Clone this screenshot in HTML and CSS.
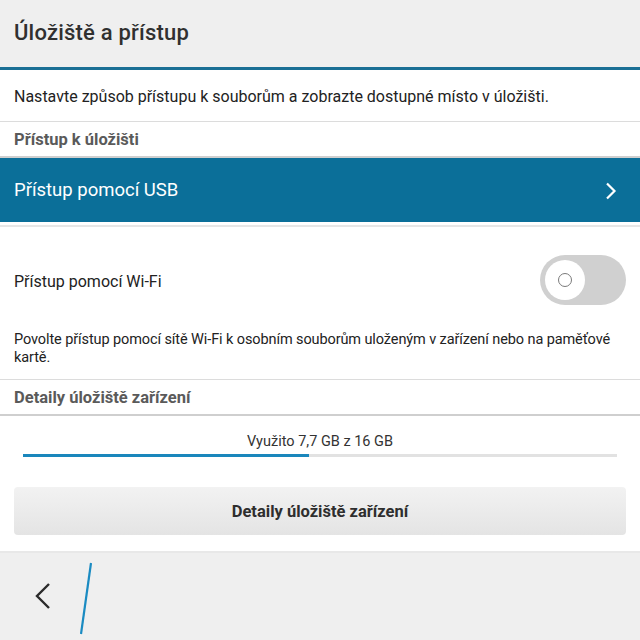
FILE: index.html
```html
<!DOCTYPE html>
<html lang="cs">
<head>
  <meta charset="UTF-8" />
  <title>Úložiště a přístup</title>
  <link rel="stylesheet" href="styles.css">
</head>
<body>

<div class="screen">
  <div class="title-bar">
    <h1>Úložiště a přístup</h1>
  </div>

  <div class="content">
    <p class="intro">Nastavte způsob přístupu k souborům a zobrazte dostupné místo v úložišti.</p>

    <div class="section-head">Přístup k úložišti</div>

    <div class="nav-row">
      <span>Přístup pomocí USB</span>
      <svg class="chevron" width="14" height="18" viewBox="0 0 14 18">
        <polyline points="3,1.5 10.5,9 3,16.5" fill="none" stroke="#fff" stroke-width="2.2" />
      </svg>
    </div>

    <div class="toggle-row">
      <span class="toggle-label">Přístup pomocí Wi-Fi</span>
      <div class="toggle">
        <div class="knob"><div class="ring"></div></div>
      </div>
    </div>

    <p class="note">Povolte přístup pomocí sítě Wi-Fi k osobním souborům uloženým v zařízení nebo na paměťové kartě.</p>

    <div class="section-head">Detaily úložiště zařízení</div>

    <div class="storage">
      <div class="storage-label">Využito 7,7 GB z 16 GB</div>
      <div class="bar"><div class="bar-fill" style="width: 48.1%"></div></div>
      <button class="action-button">Detaily úložiště zařízení</button>
    </div>
  </div>

  <div class="action-bar">
    <svg class="back" width="20" height="30" viewBox="0 0 20 30">
      <polyline points="15,2 3,14 15,26" fill="none" stroke="#2b2b2b" stroke-width="2.4" />
    </svg>
    <svg class="slash" width="16" height="74" viewBox="0 0 16 74">
      <line x1="14" y1="1" x2="4" y2="72" stroke="#1a8bc2" stroke-width="2.2" />
    </svg>
  </div>
</div>

</body>
</html>
```

FILE: styles.css
```css
* {
  margin: 0;
  padding: 0;
  box-sizing: border-box;
  font-family: 'Roboto', 'Liberation Sans', sans-serif;
}

html, body {
  height: 100%;
  background: #fff;
  color: #222;
  overflow: hidden;
}

.screen {
  display: flex;
  flex-direction: column;
  height: 640px;
  width: 640px;
}

.title-bar {
  height: 70px;
  flex: none;
  background: #efefef;
  border-bottom: 3px solid #1b6f95;
  display: flex;
  align-items: center;
  padding: 0 14px 3px;
}

.title-bar h1 {
  font-size: 22px;
  font-weight: 500;
  color: #303030;
  letter-spacing: 0.2px;
}

.content {
  flex: 1;
  display: flex;
  flex-direction: column;
}

.intro {
  height: 52px;
  flex: none;
  display: flex;
  align-items: center;
  padding: 2px 14px 0;
  font-size: 16px;
  color: #222;
  border-bottom: 1px solid #dcdcdc;
}

.section-head {
  height: 36px;
  flex: none;
  display: flex;
  align-items: center;
  padding: 0 14px;
  font-size: 16.5px;
  font-weight: 700;
  color: #5a5a5a;
  border-bottom: 2px solid #cfcfcf;
}

.nav-row {
  height: 64px;
  flex: none;
  background: #0b6f99;
  color: #fff;
  font-size: 18.5px;
  display: flex;
  align-items: center;
  justify-content: space-between;
  padding: 0 22px 0 14px;
}

.chevron {
  display: block;
  margin-top: 1px;
}

.toggle-row {
  margin-top: 3px;
  border-top: 2px solid #e6e6e6;
  height: 100px;
  flex: none;
  display: flex;
  align-items: flex-start;
  justify-content: space-between;
  padding: 28px 14px 0;
  font-size: 16px;
  color: #222;
}

.toggle-label {
  line-height: 50px;
  padding-top: 2px;
}

.toggle {
  width: 86px;
  height: 50px;
  border-radius: 25px;
  background: #d0d0d0;
  display: flex;
  align-items: center;
  padding-left: 5px;
}

.knob {
  width: 40px;
  height: 40px;
  border-radius: 50%;
  background: #fff;
  display: flex;
  align-items: center;
  justify-content: center;
}

.ring {
  width: 14px;
  height: 14px;
  border-radius: 50%;
  border: 1.5px solid #7a7a7a;
}

.note {
  height: 55px;
  flex: none;
  padding: 6px 14px 0;
  font-size: 14.5px;
  line-height: 18px;
  letter-spacing: -0.1px;
  color: #222;
  border-bottom: 1px solid #dcdcdc;
}

.storage {
  display: flex;
  flex-direction: column;
  padding: 17px 14px 0;
  border-bottom: 2px solid #e8e8e8;
  height: 137px;
  flex: none;
}

.storage-label {
  text-align: center;
  font-size: 14.5px;
  line-height: 18px;
  color: #333;
}

.bar {
  height: 3px;
  margin: 3px 9px 0;
  background: #e2e2e2;
}

.bar-fill {
  height: 100%;
  background: #1a87bc;
}

.action-button {
  margin-top: 30px;
  height: 48px;
  border: none;
  border-radius: 4px;
  background: linear-gradient(to bottom, #f2f2f2, #e4e4e4);
  font-size: 16.5px;
  font-weight: 700;
  color: #2e2e2e;
}

.action-bar {
  height: 87px;
  flex: none;
  background: #efefef;
  display: flex;
  align-items: center;
  padding-left: 34px;
}

.back {
  display: block;
  margin-top: 1px;
}

.slash {
  display: block;
  margin-left: 23px;
  margin-top: 4px;
}
```
